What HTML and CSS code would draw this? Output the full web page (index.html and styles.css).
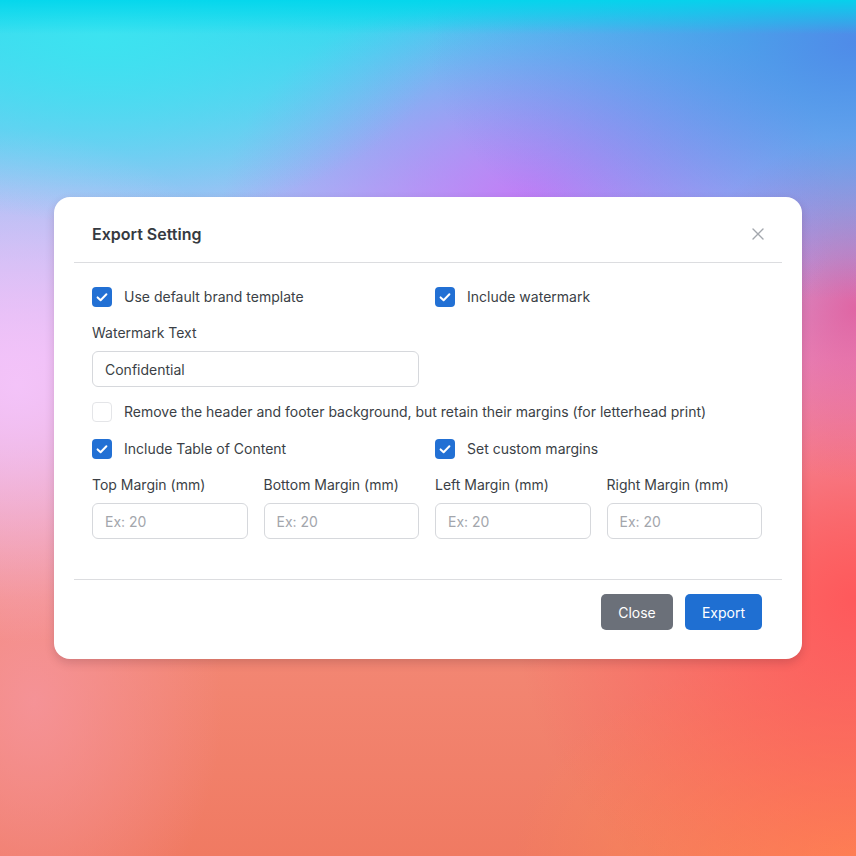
FILE: index.html
```html
<!DOCTYPE html>
<html lang="en">
<head>
    <meta charset="UTF-8">
    <meta name="viewport" content="width=device-width, initial-scale=1.0">
    <title>Export Setting</title>
    <link rel="stylesheet" href="styles.css">
</head>
<body>

<div class="modal">
    <div class="modal-header">
        <h2>Export Setting</h2>
        <button class="close-x" aria-label="Close">
            <svg width="12" height="12" viewBox="0 0 12 12"><path d="M1 1L11 11M11 1L1 11" stroke="#a3a7ad" stroke-width="1.4" stroke-linecap="round"/></svg>
        </button>
    </div>

    <div class="modal-body">
        <div class="row-2">
            <label class="check">
                <span class="box checked"><svg width="20" height="20" viewBox="0 0 20 20"><path d="M5.6 10.4L8.6 13.2L14.4 7.2" fill="none" stroke="#fff" stroke-width="2" stroke-linecap="round" stroke-linejoin="round"/></svg></span>
                Use default brand template
            </label>
            <label class="check">
                <span class="box checked"><svg width="20" height="20" viewBox="0 0 20 20"><path d="M5.6 10.4L8.6 13.2L14.4 7.2" fill="none" stroke="#fff" stroke-width="2" stroke-linecap="round" stroke-linejoin="round"/></svg></span>
                Include watermark
            </label>
        </div>

        <div class="field watermark">
            <label>Watermark Text</label>
            <input type="text" value="Confidential">
        </div>

        <label class="check remove-row">
            <span class="box"></span>
            Remove the header and footer background, but retain their margins (for letterhead print)
        </label>

        <div class="row-2 toc-row">
            <label class="check">
                <span class="box checked"><svg width="20" height="20" viewBox="0 0 20 20"><path d="M5.6 10.4L8.6 13.2L14.4 7.2" fill="none" stroke="#fff" stroke-width="2" stroke-linecap="round" stroke-linejoin="round"/></svg></span>
                Include Table of Content
            </label>
            <label class="check">
                <span class="box checked"><svg width="20" height="20" viewBox="0 0 20 20"><path d="M5.6 10.4L8.6 13.2L14.4 7.2" fill="none" stroke="#fff" stroke-width="2" stroke-linecap="round" stroke-linejoin="round"/></svg></span>
                Set custom margins
            </label>
        </div>

        <div class="row-4">
            <div class="field">
                <label>Top Margin (mm)</label>
                <input type="text" placeholder="Ex: 20">
            </div>
            <div class="field">
                <label>Bottom Margin (mm)</label>
                <input type="text" placeholder="Ex: 20">
            </div>
            <div class="field">
                <label>Left Margin (mm)</label>
                <input type="text" placeholder="Ex: 20">
            </div>
            <div class="field">
                <label>Right Margin (mm)</label>
                <input type="text" placeholder="Ex: 20">
            </div>
        </div>
    </div>

    <div class="modal-footer">
        <button class="btn btn-gray">Close</button>
        <button class="btn btn-blue">Export</button>
    </div>
</div>

</body>
</html>
```

FILE: styles.css
```css
html, body {
    height: 100%;
}
body {
    margin: 0;
    font-family: Inter, "Noto Sans", sans-serif;
    color: #3b3f46;
    display: flex;
    align-items: center;
    justify-content: center;
    background-color: #f47864;
    background-image:
        linear-gradient(180deg, rgba(0, 214, 236, 0.9) 0%, rgba(0, 214, 236, 0) 4%),
        radial-gradient(ellipse 40% 22% at 12% 4%, rgba(60, 228, 240, 0.95), rgba(60, 228, 240, 0) 100%),
        radial-gradient(ellipse 50% 30% at 100% 5%, rgba(80, 135, 232, 0.95), rgba(80, 135, 232, 0) 100%),
        radial-gradient(ellipse 36% 26% at 62% 24%, rgba(196, 120, 246, 0.95), rgba(196, 120, 246, 0) 100%),
        radial-gradient(ellipse 30% 30% at 2% 45%, rgba(244, 196, 250, 0.95), rgba(244, 196, 250, 0) 100%),
        radial-gradient(ellipse 20% 20% at 100% 36%, rgba(226, 84, 150, 0.8), rgba(226, 84, 150, 0) 100%),
        radial-gradient(ellipse 40% 40% at 100% 70%, rgba(255, 86, 90, 0.95), rgba(255, 86, 90, 0) 100%),
        radial-gradient(ellipse 40% 25% at 100% 100%, rgba(255, 140, 80, 0.9), rgba(255, 140, 80, 0) 100%),
        radial-gradient(ellipse 22% 30% at 4% 82%, rgba(246, 150, 160, 0.8), rgba(246, 150, 160, 0) 100%),
        linear-gradient(180deg, #2ad8ee 0%, #9cc0f4 22%, #e4b8f0 42%, #f38a78 70%, #f07a62 100%);
}
.modal {
    width: 748px;
    box-sizing: border-box;
    background-color: #fff;
    border-radius: 16px;
    padding: 0 20px;
    box-shadow: 0 4px 10px rgba(60, 20, 40, 0.18);
}
.modal-header {
    display: flex;
    align-items: center;
    justify-content: space-between;
    padding: 25px 18px 16px;
    border-bottom: 1px solid #dcdde0;
}
.modal-header h2 {
    margin: 0;
    font-size: 16px;
    line-height: 24px;
    font-weight: 600;
    color: #363a41;
}
.close-x {
    border: none;
    background: none;
    padding: 0;
    width: 12px;
    height: 12px;
    display: flex;
    cursor: pointer;
}
.modal-body {
    padding: 24px 20px 40px 18px;
    border-bottom: 1px solid #dcdde0;
    font-size: 14px;
}
.row-2 {
    display: grid;
    grid-template-columns: minmax(0, 1fr) minmax(0, 1fr);
    gap: 16px;
}
.row-4 {
    display: grid;
    grid-template-columns: repeat(4, minmax(0, 1fr));
    gap: 16px;
    margin-top: 16px;
}
.check {
    display: flex;
    align-items: center;
    gap: 12px;
    line-height: 20px;
    color: #3b3f46;
    cursor: pointer;
}
.box {
    width: 20px;
    height: 20px;
    box-sizing: border-box;
    border-radius: 4px;
    border: 1px solid #e4e5e8;
    background-color: #fff;
    flex: none;
    display: flex;
}
.box.checked {
    border: none;
    background-color: #2270d4;
}
.field {
    display: flex;
    flex-direction: column;
    gap: 8px;
    min-width: 0;
}
.field label {
    line-height: 20px;
    color: #3b3f46;
}
.field input {
    height: 36px;
    width: 100%;
    min-width: 0;
    box-sizing: border-box;
    border: 1px solid #d6d8dc;
    border-radius: 6px;
    padding: 0 12px;
    font-family: inherit;
    font-size: 14px;
    color: #3b3f46;
    outline: none;
}
.field input::placeholder {
    color: #a3a6ac;
}
.watermark {
    margin-top: 16px;
    width: calc(50% - 8px);
}
.remove-row {
    margin-top: 15px;
}
.toc-row {
    margin-top: 17px;
}
.modal-footer {
    display: flex;
    justify-content: flex-end;
    gap: 12px;
    padding: 14px 20px 29px 18px;
}
.btn {
    height: 36px;
    padding: 0 15px;
    border: none;
    border-radius: 5px;
    font-family: inherit;
    font-size: 14px;
    color: #fff;
    cursor: pointer;
}
.btn-gray {
    background-color: #6b7079;
    min-width: 72px;
}
.btn-blue {
    background-color: #1f6fd2;
    min-width: 77px;
}
```
